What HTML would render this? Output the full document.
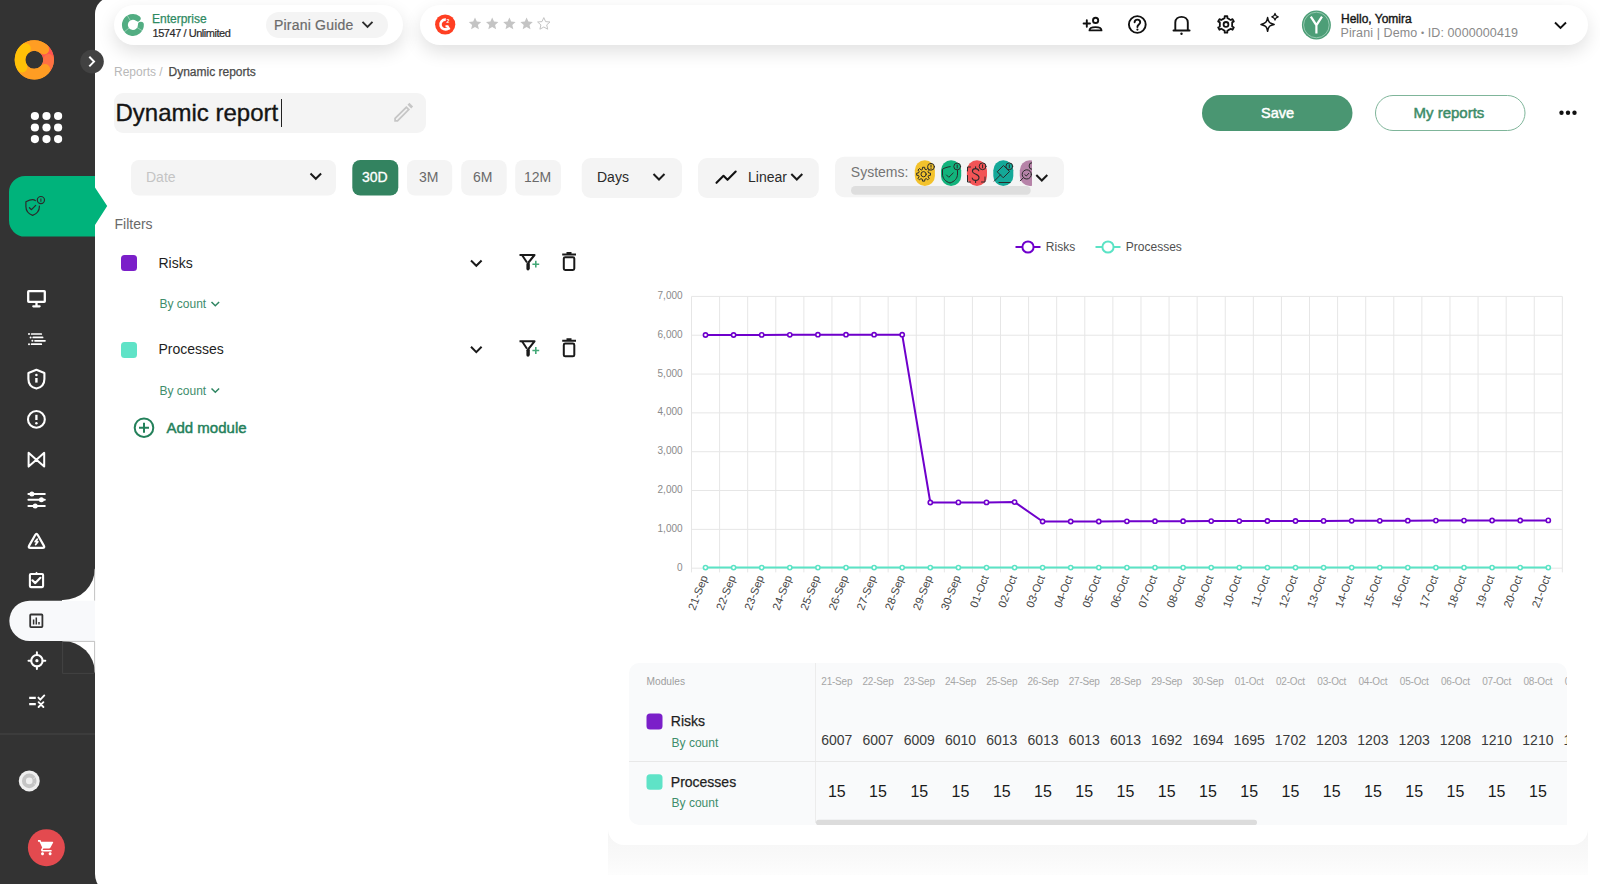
<!DOCTYPE html>
<html><head><meta charset="utf-8">
<style>
*{box-sizing:border-box;margin:0;padding:0}
html,body{width:1600px;height:884px;overflow:hidden}
body{background:#333333;font-family:"Liberation Sans",sans-serif;position:relative;color:#222}
#main{position:absolute;left:95px;top:-3px;width:1505px;height:897px;background:#fff;border-radius:17px 0 0 20px}
.pill{position:absolute;background:#fff;border-radius:20px;box-shadow:0 7px 18px rgba(0,0,0,0.12)}
.t{position:absolute;white-space:nowrap;line-height:1}
.btn{position:absolute;border-radius:8px;background:#f4f4f4}
svg{position:absolute;overflow:visible}
</style></head><body>
<div id="main"></div>
<svg style="left:0;top:0" width="120" height="884" viewBox="0 0 120 884">
  <!-- logo donut -->
  <g fill="none" stroke-width="10.6">
    <circle cx="34.3" cy="59.8" r="14.3" stroke="#ff9d23"/>
    <path d="M43.10,48.53 A14.3,14.3 0 0 1 48.59,59.30" stroke="#ff5252"/>
    <path d="M48.59,59.30 A14.3,14.3 0 0 1 46.16,67.80" stroke="#ff7043" stroke-linecap="round"/>
    <path d="M25.50,48.53 A14.3,14.3 0 0 1 43.87,49.17" stroke="#ff9d23" stroke-linecap="round"/>
    <path d="M44.93,69.37 A14.3,14.3 0 0 1 22.04,67.17" stroke="#ff9d23" stroke-linecap="round"/>
    <path d="M22.04,67.17 A14.3,14.3 0 0 1 25.50,48.53" stroke="#ffc107" stroke-linecap="round"/>
  </g>
  <!-- collapse button -->
  <circle cx="92" cy="61.6" r="11.8" fill="#424242"/>
  <path d="M89.3,56.8 L94,61.6 L89.3,66.4" fill="none" stroke="#fff" stroke-width="2"/>
  <!-- 9 dots -->
  <g fill="#fff">
    <circle cx="34.9" cy="116" r="4.1"/><circle cx="46.5" cy="116" r="4.1"/><circle cx="58.1" cy="116" r="4.1"/>
    <circle cx="34.9" cy="127.5" r="4.1"/><circle cx="46.5" cy="127.5" r="4.1"/><circle cx="58.1" cy="127.5" r="4.1"/>
    <circle cx="34.9" cy="139.1" r="4.1"/><circle cx="46.5" cy="139.1" r="4.1"/><circle cx="58.1" cy="139.1" r="4.1"/>
  </g>
  <!-- green active module item -->
  <path d="M25,176 H95 V187.6 L107.2,206 L95,225 V236.6 H25 A16,16 0 0 1 9,220.6 V192 A16,16 0 0 1 25,176 Z" fill="#00b37b"/>
  <g fill="none" stroke="#2b2b2b" stroke-width="1.2" stroke-linejoin="round" stroke-linecap="round">
    <path d="M35.3,200.5 C33.6,199.1 31,199 25.9,201.8 V206.5 C25.9,210.5 28.5,213.8 32.6,215.4 C36.7,213.8 39.4,210.5 39.4,206.5 V206"/>
    <path d="M29.4,207.7 L31.5,209.7 L35.7,205.4"/>
    <circle cx="40.9" cy="200.1" r="3.6"/>
    <path d="M40.9,198.9 V201.4" stroke-width="1"/>
  </g>
  <!-- menu icons -->
  <g fill="none" stroke="#fff" stroke-width="2.1" stroke-linecap="round" stroke-linejoin="round">
    <!-- monitor -->
    <rect x="28.2" y="291.2" width="16.6" height="10.6" rx="0.6" stroke-width="2.3" stroke-linejoin="miter"/>
    <path d="M36.5,302.5 V305.8 M33.3,306.3 H39.6" stroke-width="2.3"/>
    <!-- list -->
    <path d="M31.6,334 H41.3 M33.2,337.4 H42.6 M35,340.8 H45 M31.6,344.2 H41.3" stroke-width="1.7"/>
    <!-- shield i -->
    <path d="M36.4,369.8 L28.4,373 V379 C28.4,383.8 31.6,387.5 36.4,388.6 C41.2,387.5 44.4,383.8 44.4,379 V373 Z"/>
    <path d="M36.4,378 V382.6" stroke-width="2.4" stroke-linecap="butt"/>
    <!-- exclamation circle -->
    <circle cx="36.4" cy="419.4" r="8.4"/>
    <path d="M36.4,414.8 V420" stroke-width="2.3" stroke-linecap="butt"/>
    <!-- bowtie -->
    <path d="M28.6,452.8 L36.4,459.7 L44.2,452.8 V466.6 L36.4,459.7 L28.6,466.6 Z" stroke-width="2"/>
    <!-- sliders -->
    <path d="M28.4,493.9 H44.8 M28.4,499.8 H44.8 M28.4,506.1 H44.8" stroke-width="2"/>
    <!-- warning -->
    <path d="M37.79,535.06 L43.81,545.64 Q45.10,547.90 42.50,547.90 L30.50,547.90 Q27.90,547.90 29.19,545.64 L35.21,535.06 Q36.50,532.80 37.79,535.06 Z" stroke-width="2.2"/>
    <!-- clipboard -->
    <rect x="29.9" y="574" width="13.2" height="13.1" rx="1" stroke-width="2.1"/>
    <path d="M32.4,580.3 L35.3,583.1 L40.4,577.8" stroke-width="2.2"/>
  </g>
  <g fill="#fff">
    <circle cx="29" cy="334" r="1"/><circle cx="30.6" cy="337.4" r="1"/><circle cx="32.4" cy="340.8" r="1"/><circle cx="29" cy="344.2" r="1"/>
    <circle cx="36.4" cy="375" r="1.3"/>
    <circle cx="36.4" cy="423.2" r="1.25"/>
    <circle cx="31.9" cy="493.9" r="2.5"/><circle cx="41.4" cy="499.8" r="2.5"/><circle cx="35.2" cy="506.1" r="2.5"/>
    <path d="M37.3,539.2 L35.2,541.7 H37.8 L35.7,544.5" fill="none" stroke="#fff" stroke-width="1.8" stroke-linejoin="round" stroke-linecap="round"/>
    <path d="M33.8,574.5 L36.5,571.8 L39.2,574.5 Z"/>
  </g>
  <!-- active reports pill with curves -->
  <rect x="62" y="568" width="33" height="106" fill="#fff"/>
  <path d="M62,567 H95 V568 A32,32 0 0 1 63,600 H62 Z" fill="#333"/>
  <path d="M62,674 H95 V673 A32,32 0 0 0 63,641 H62 Z" fill="#333"/>
  <path d="M29.5,600.7 H95 V641 H29.5 A20.15,20.15 0 0 1 29.5,600.7 Z" fill="#f8f9fb"/>
  <path d="M94.6,569.2 V600.6 M62.2,641.4 H94.6 V672.6" fill="none" stroke="#a8a8a8" stroke-width="0.7"/>
  <path d="M62.6,641.6 V673.4 H94.4" fill="none" stroke="#474747" stroke-width="0.8"/>
  <g fill="none" stroke="#333" stroke-width="1.8">
    <rect x="30.2" y="614.5" width="12.2" height="12.6" rx="0.8"/>
  </g>
  <path d="M33.6,619.5 V624.5 M36.3,617.5 V624.5 M39,622 V624.5" stroke="#333" stroke-width="1.5"/>
  <g fill="none" stroke="#fff" stroke-width="1.8" stroke-linecap="round">
    <!-- crosshair -->
    <circle cx="36.9" cy="660.7" r="5.7" stroke-width="2.1"/>
    <path d="M36.9,652.3 V655 M36.9,666.4 V669.1 M28.5,660.7 H31.2 M42.6,660.7 H45.3" stroke-width="2"/>
    <!-- list check x -->
    <path d="M29.2,697.9 H35.8 M29.2,704.2 H35.8" stroke-width="2.2" stroke-linecap="butt"/>
    <path d="M38.4,697.6 L40.3,699.6 L44.3,695.4 M38.6,702.2 L43.4,707 M43.4,702.2 L38.6,707" stroke-width="1.9"/>
  </g>
  <circle cx="36.9" cy="660.7" r="1.6" fill="#fff"/>
  <!-- divider -->
  <rect x="0" y="733.5" width="95" height="1" fill="#474747"/>
  <!-- gray circle -->
  <circle cx="29.25" cy="780.9" r="10.5" fill="#efefef"/>
  <circle cx="29.25" cy="780.9" r="5.3" fill="none" stroke="#c4c4c4" stroke-width="4"/>
  <path d="M33.5,778.5 L35.5,777.5 M33.8,783.5 L35.8,784.5" stroke="#e8e8e8" stroke-width="0.8"/>
  <!-- cart -->
  <circle cx="46.4" cy="847.7" r="18.5" fill="#e34a4f"/>
  <path transform="translate(37.2,838.6) scale(0.76)" fill="#fff" d="M7 18c-1.1 0-1.99.9-1.99 2S5.9 22 7 22s2-.9 2-2-.9-2-2-2zM1 2v2h2l3.6 7.59-1.35 2.45c-.16.28-.25.61-.25.96 0 1.1.9 2 2 2h12v-2H7.42c-.14 0-.25-.11-.25-.25l.03-.12.9-1.63h7.450c.75 0 1.41-.41 1.75-1.03l3.58-6.49A1.003 1.003 0 0020 4H5.21l-.94-2H1zm16 16c-1.1 0-1.990.9-1.99 2s.89 2 1.99 2 2-.9 2-2-.9-2-2-2z"/>
</svg>
<div class="pill" style="left:114px;top:5px;width:289px;height:40px"></div>
<div class="pill" style="left:420px;top:5px;width:1168px;height:40px"></div>
<svg style="left:0;top:0" width="1600" height="60" viewBox="0 0 1600 60">
  <!-- green C logo -->
  <path d="M140.90,24.62 A8.0,8.0 0 1 1 137.71,18.51" fill="none" stroke="#52ad82" stroke-width="5.9" stroke-linecap="round"/>
  <path d="M130.58,21.04 L126.98,15.04 M129.40,27.73 L123.96,32.14 M136.72,27.28 L142.65,30.99" stroke="#fff" stroke-opacity="0.55" stroke-width="0.7"/>
  <!-- pirani guide pill -->
  <rect x="266" y="12" width="122" height="26" rx="13" fill="#f4f4f4"/>
  <path d="M362.5,21.8 L367.5,26.8 L372.5,21.8" fill="none" stroke="#2b2b2b" stroke-width="1.9"/>
  <!-- G2 -->
  <circle cx="445.2" cy="24.5" r="10.1" fill="#ff3f22"/>
  <path d="M445.8,19.6 A4.9,4.9 0 1 0 448.3,28.4" fill="none" stroke="#fff" stroke-width="2.6"/>
  <path d="M445.5,26.2 L447.6,26.2 L449.6,29.6" fill="none" stroke="#fff" stroke-width="2"/>
  <text x="446.6" y="23.2" font-size="5px" font-weight="bold" fill="#fff" font-family="Liberation Sans">2</text>
  <!-- stars -->
  <g fill="#c4c4c4">
    <path id="star" d="M475,17.6 L476.8,21.6 L481.2,22 L477.9,24.9 L478.9,29.2 L475,27 L471.1,29.2 L472.1,24.9 L468.8,22 L473.2,21.6 Z"/>
    <use href="#star" x="17.2"/><use href="#star" x="34.4"/><use href="#star" x="51.6"/>
  </g>
  <use href="#star" x="68.8" fill="none" stroke="#c4c4c4" stroke-width="1"/>
  <!-- icons -->
  <g fill="none" stroke="#111" stroke-width="1.9" stroke-linecap="round" stroke-linejoin="round">
    <!-- person add -->
    <circle cx="1095.6" cy="20.4" r="2.6"/>
    <path d="M1089.5,30.4 C1089.5,26 1101.5,26 1101.5,30.4 Z"/>
    <path d="M1083.6,23.5 H1090 M1086.8,20.3 V26.7"/>
    <!-- help -->
    <circle cx="1137.3" cy="24.5" r="8.4"/>
    <path d="M1134.6,22.2 C1134.6,18.8 1140.2,18.8 1140.2,22.2 C1140.2,24.4 1137.4,24.6 1137.4,27"/>
    <!-- bell -->
    <path d="M1175.3,30.5 V22.5 C1175.3,15 1187.8,15 1187.8,22.5 V30.5 M1173.5,30.5 H1189.6"/>
    <!-- gear -->
    <path d="M1223.68,18.65 L1224.65,18.04 L1224.69,16.10 L1227.31,16.10 L1227.35,18.04 L1229.82,19.51 L1230.83,20.05 L1232.53,19.11 L1233.84,21.39 L1232.18,22.39 L1232.14,25.26 L1232.18,26.41 L1233.84,27.41 L1232.53,29.69 L1230.83,28.75 L1228.32,30.15 L1227.35,30.76 L1227.31,32.70 L1224.69,32.70 L1224.65,30.76 L1222.18,29.29 L1221.17,28.75 L1219.47,29.69 L1218.16,27.41 L1219.82,26.41 L1219.86,23.54 L1219.82,22.39 L1218.16,21.39 L1219.47,19.11 L1221.17,20.05 Z" stroke-width="1.8"/>
    <circle cx="1226" cy="24.4" r="2.4" stroke-width="1.8"/>
    <!-- sparkle -->
    <path d="M1267.6,17.5 C1268.3,22 1269.5,23.3 1274.2,24.4 C1269.5,25.5 1268.3,26.8 1267.6,31.3 C1266.9,26.8 1265.7,25.5 1261,24.4 C1265.7,23.3 1266.9,22 1267.6,17.5 Z" stroke-width="1.5"/>
    <path d="M1275,13.5 C1275.3,15.6 1275.8,16.1 1278.2,16.8 C1275.8,17.5 1275.3,18 1275,20 C1274.7,18 1274.2,17.5 1271.8,16.8 C1274.2,16.1 1274.7,15.6 1275,13.5 Z" stroke-width="1.3"/>
  </g>
  <circle cx="1181.5" cy="33.8" r="1.2" fill="#111"/>
  <circle cx="1137.4" cy="29.6" r="1.1" fill="#111"/>
  <!-- avatar -->
  <circle cx="1316.4" cy="25" r="14.5" fill="#4d9e77"/>
  <circle cx="1316.4" cy="25" r="12.8" fill="none" stroke="#a8d4bf" stroke-width="0.8"/>
  <path d="M1310.8,16.6 L1316.4,25.2 L1322,16.6 M1316.4,25.2 V33.4" fill="none" stroke="#fff" stroke-width="2.2"/>
  <!-- chevron -->
  <path d="M1555,22.5 L1560.5,28 L1566,22.5" fill="none" stroke="#111" stroke-width="1.9"/>
</svg>
<div class="t" style="left:152px;top:13.2px;font-size:12px;color:#2f8a62;-webkit-text-stroke:0.25px #2f8a62">Enterprise</div>
<div class="t" style="left:152.5px;top:28.2px;font-size:11px;color:#2a2a2a;letter-spacing:-0.45px;-webkit-text-stroke:0.2px #2a2a2a">15747 / Unlimited</div>
<div class="t" style="left:274px;top:17.7px;font-size:14px;color:#6b6b6b;letter-spacing:0.2px;-webkit-text-stroke:0.2px #6b6b6b">Pirani Guide</div>
<div class="t" style="left:1341px;top:12.6px;font-size:12px;color:#161616;-webkit-text-stroke:0.4px #161616">Hello, Yomira</div>
<div class="t" style="left:1340.5px;top:27.3px;font-size:12.5px;color:#8a8a8a;letter-spacing:0.1px">Pirani | Demo <span style="font-size:9px;position:relative;top:-1.5px">•</span> ID: 0000000419</div>
<div class="t" style="left:114px;top:65.9px;font-size:12px;color:#b8b8b8">Reports /</div>
<div class="t" style="left:168.5px;top:65.9px;font-size:12px;color:#4a4a4a;-webkit-text-stroke:0.25px #4a4a4a">Dynamic reports</div>
<div class="abs" style="position:absolute;left:113.75px;top:93px;width:312px;height:40px;background:#f4f4f4;border-radius:9px"></div>
<div class="t" style="left:115.5px;top:100.9px;font-size:24px;color:#151515;-webkit-text-stroke:0.35px #151515">Dynamic report</div>
<div style="position:absolute;left:281px;top:99px;width:1.2px;height:28px;background:#222"></div>
<svg style="left:0;top:0" width="1600" height="220" viewBox="0 0 1600 220">
  <!-- pencil -->
  <g fill="#c6c6c6">
    <path d="M394.2,121.7 V118 L406.3,105.9 L410,109.6 L397.9,121.7 Z M396,119.9 H397.1 L407.5,109.5 L406.4,108.4 L396,118.8 Z" fill-rule="evenodd"/>
    <path d="M407.5,104.7 L409.4,102.8 L413.1,106.5 L411.2,108.4 Z"/>
  </g>
  <!-- date select -->
  <rect x="131" y="160" width="205" height="35.5" rx="8" fill="#f4f4f4"/>
  <path d="M310.5,173.5 L315.8,178.8 L321.1,173.5" fill="none" stroke="#1a1a1a" stroke-width="2"/>
  <!-- period buttons -->
  <rect x="352.3" y="160" width="46" height="35.5" rx="8" fill="#338360"/>
  <rect x="407" y="160" width="45.2" height="35.5" rx="8" fill="#f4f4f4"/>
  <rect x="461.2" y="160" width="45.5" height="35.5" rx="8" fill="#f4f4f4"/>
  <rect x="515.2" y="160" width="45.8" height="35.5" rx="8" fill="#f4f4f4"/>
  <!-- days -->
  <rect x="581.7" y="158" width="100.3" height="40" rx="9" fill="#f4f4f4"/>
  <path d="M653.5,174 L659,179.5 L664.5,174" fill="none" stroke="#1a1a1a" stroke-width="2"/>
  <!-- linear -->
  <rect x="698" y="158" width="120.8" height="40" rx="9" fill="#f4f4f4"/>
  <path d="M716.5,182.8 L723.5,175.8 L727.5,179.8 L735.7,171.6" fill="none" stroke="#111" stroke-width="2.1" stroke-linecap="round" stroke-linejoin="round"/>
  <path d="M791.3,174 L796.8,179.5 L802.3,174" fill="none" stroke="#1a1a1a" stroke-width="2"/>
  <!-- systems -->
  <rect x="835" y="156.7" width="229" height="40.5" rx="9" fill="#f4f4f4"/>
  <rect x="851" y="186" width="179.7" height="8.7" rx="4.3" fill="#dedede"/>
  <rect x="914.8" y="160.2" width="20.1" height="25.8" rx="10" fill="#f3c22c"/>
  <rect x="941" y="160.2" width="20.2" height="25.8" rx="10" fill="#12b37c"/>
  <rect x="966.9" y="160.2" width="20.1" height="25.8" rx="10" fill="#f25456"/>
  <rect x="993.3" y="160.2" width="20" height="25.8" rx="10" fill="#14a898"/>
  <clipPath id="clp"><rect x="1010" y="150" width="22" height="50"/></clipPath>
  <rect x="1019.8" y="160.2" width="20" height="25.8" rx="10" fill="#b683a8" clip-path="url(#clp)"/>
  <g fill="none" stroke="#2a2a2a" stroke-width="1" stroke-linejoin="round" stroke-linecap="round">
    <path d="M922.34,169.15 L922.50,167.29 L924.70,167.29 L924.86,169.15 L926.28,169.74 L927.71,168.54 L929.26,170.09 L928.06,171.52 L928.65,172.94 L930.51,173.10 L930.51,175.30 L928.65,175.46 L928.06,176.88 L929.26,178.31 L927.71,179.86 L926.28,178.66 L924.86,179.25 L924.70,181.11 L922.50,181.11 L922.34,179.25 L920.92,178.66 L919.49,179.86 L917.94,178.31 L919.14,176.88 L918.55,175.46 L916.69,175.30 L916.69,173.10 L918.55,172.94 L919.14,171.52 L917.94,170.09 L919.49,168.54 L920.92,169.74 Z"/>
    <circle cx="923.6" cy="174.2" r="2.6"/>
    <circle cx="931" cy="166.8" r="3.4" fill="#f3c22c"/>
    <path d="M931,165 V167.2 M931,168.6 V168.8"/>
    <path d="M950.2,166.6 C947,167 944.5,168 942.5,169.2 V174 C942.5,178.5 945.5,181.5 950,183 C954.5,181.5 957.5,178.5 957.5,174 V170.5"/>
    <path d="M946.5,175 L948.8,177.3 L953.2,173"/>
    <circle cx="957.2" cy="166.5" r="3.4" fill="#12b37c"/>
    <path d="M957.2,165 V168"/>
    <path d="M978.8,170.8 C978.3,168.8 976.5,168.6 975.6,168.6 C973.5,168.6 972.4,169.8 972.4,171.2 C972.4,174.5 979,173.5 979,177.5 C979,179 977.8,180.4 975.6,180.4 C973.8,180.4 972.5,179.5 972.2,178 M975.6,166.8 V168.6 M975.6,180.4 V182.4" stroke-width="1.1"/>
    <path d="M967.5,175.5 V182 H970.5 M981.5,182 H985 V177 M967.5,171 V167 H970.5"/>
    <circle cx="982.6" cy="166.3" r="3.4" fill="#f25456"/>
    <path d="M982.6,164.8 V167.8"/>
    <path d="M994.2,181.2 L1000.5,174.8 M997.5,171.5 L1003.5,165.5 L1009.5,171.5 L1003.5,177.5 Z M999,182.5 H1010"/>
    <circle cx="1009.3" cy="166.3" r="3.4" fill="#14a898"/>
    <path d="M1009.3,164.8 V167.8"/>
    <circle cx="1026.8" cy="174.4" r="4.6" clip-path="url(#clp)"/>
    <path d="M1023.3,177.8 L1020.3,180.8 M1024.8,174.6 L1026.3,176 L1028.8,173.3" clip-path="url(#clp)"/>
    <circle cx="1032.5" cy="166" r="3.4" fill="#b683a8" clip-path="url(#clp)"/>
  </g>
  <path d="M1036.3,175 L1041.8,180.5 L1047.3,175" fill="none" stroke="#1a1a1a" stroke-width="2"/>
  <!-- save / my reports -->
  <rect x="1202" y="95" width="150.5" height="36" rx="18" fill="#4a9672"/>
  <rect x="1375.5" y="95.5" width="149.5" height="35" rx="17.5" fill="#fff" stroke="#7fb59a" stroke-width="1"/>
  <g fill="#111"><circle cx="1561.5" cy="112.8" r="2.2"/><circle cx="1568" cy="112.8" r="2.2"/><circle cx="1574.5" cy="112.8" r="2.2"/></g>
</svg>
<div class="t" style="left:146px;top:170.1px;font-size:14px;color:#c4c4c4">Date</div>
<div class="t" style="left:362px;top:170.1px;font-size:14px;color:#fff;-webkit-text-stroke:0.3px #fff">30D</div>
<div class="t" style="left:419px;top:170.1px;font-size:14px;color:#6a6a6a">3M</div>
<div class="t" style="left:473px;top:170.1px;font-size:14px;color:#6a6a6a">6M</div>
<div class="t" style="left:524px;top:170.1px;font-size:14px;color:#6a6a6a">12M</div>
<div class="t" style="left:597px;top:170.1px;font-size:14px;color:#2a2a2a">Days</div>
<div class="t" style="left:748px;top:170.1px;font-size:14px;color:#2a2a2a">Linear</div>
<div class="t" style="left:850.8px;top:164.9px;font-size:14px;color:#757575">Systems:</div>
<div class="t" style="left:1261px;top:106.2px;font-size:14.5px;color:#fff;-webkit-text-stroke:0.5px #fff">Save</div>
<div class="t" style="left:1413.5px;top:105.4px;font-size:15px;color:#3d8c68;-webkit-text-stroke:0.5px #3d8c68">My reports</div>
<div class="t" style="left:114.5px;top:217.4px;font-size:14px;color:#6a6a6a">Filters</div>
<div style="position:absolute;left:121px;top:255.4px;width:16px;height:16px;border-radius:3.5px;background:#7b1fc9"></div>
<div class="t" style="left:158.5px;top:255.6px;font-size:14px;color:#1e1e1e">Risks</div>
<div class="t" style="left:159.5px;top:298.3px;font-size:12px;color:#3e8d6b">By count</div>
<div style="position:absolute;left:121.3px;top:342px;width:16px;height:16px;border-radius:3.5px;background:#5fe3c7"></div>
<div class="t" style="left:158.5px;top:341.5px;font-size:14px;color:#1e1e1e">Processes</div>
<div class="t" style="left:159.5px;top:384.7px;font-size:12px;color:#3e8d6b">By count</div>
<div class="t" style="left:166.5px;top:420px;font-size:15px;color:#23805a;-webkit-text-stroke:0.45px #23805a">Add module</div>
<svg style="left:0;top:0" width="600" height="450" viewBox="0 0 600 450">
  <g id="frow" fill="none" stroke="#1a1a1a" stroke-width="2">
    <path d="M471,260.5 L476.3,265.8 L481.6,260.5"/>
    <path d="M519.5,255 H534.5 L528.5,262.5 V269 M528.5,262.5 L534.5,255" stroke-linejoin="round" stroke-width="2.1"/>
    <path d="M522,255 L527,262.5" />
    <path d="M562.2,254.5 H576 M566.5,253 H571.5" stroke-width="2"/>
    <rect x="563.8" y="257.2" width="10.5" height="12.8" rx="1.4"/>
  </g>
  <path d="M528,264 V268.8" stroke="#1a1a1a" stroke-width="3.2" stroke-linecap="round"/>
  <path d="M532.4,264.2 H539.2 M535.8,260.8 V267.6" stroke="#43a877" stroke-width="1.6"/>
  <use href="#frow" y="86.3"/>
  <path d="M528,350.3 V355.1" stroke="#1a1a1a" stroke-width="3.2" stroke-linecap="round"/>
  <path d="M532.4,350.5 H539.2 M535.8,347.1 V353.9" stroke="#43a877" stroke-width="1.6"/>
  <path d="M211.5,302 L215.3,305.8 L219.1,302" fill="none" stroke="#2e8561" stroke-width="1.5"/>
  <path d="M211.5,388.5 L215.3,392.3 L219.1,388.5" fill="none" stroke="#2e8561" stroke-width="1.5"/>
  <circle cx="144" cy="427.7" r="9.3" fill="none" stroke="#23805a" stroke-width="2"/>
  <path d="M139,427.7 H149 M144,422.7 V432.7" stroke="#23805a" stroke-width="2"/>
</svg>
<div style="position:absolute;left:608px;top:830px;width:979.5px;height:44.5px;background:linear-gradient(to bottom,#f5f5f5 0%,#f9f9f9 60%,#fdfdfd 100%)"></div>
<div style="position:absolute;left:608px;top:215px;width:979.5px;height:630px;border-radius:16px;background:#fff"></div>
<svg style="left:0;top:0" width="1600" height="884" viewBox="0 0 1600 884">
<path d="M691.5,568.2 H1562.3 M691.5,529.37 H1562.3 M691.5,490.54 H1562.3 M691.5,451.71 H1562.3 M691.5,412.89 H1562.3 M691.5,374.06 H1562.3 M691.5,335.23 H1562.3 M691.5,296.4 H1562.3 M691.5,296.4 V572.4 M719.59,296.4 V572.4 M747.68,296.4 V572.4 M775.78,296.4 V572.4 M803.87,296.4 V572.4 M831.96,296.4 V572.4 M860.05,296.4 V572.4 M888.14,296.4 V572.4 M916.24,296.4 V572.4 M944.33,296.4 V572.4 M972.42,296.4 V572.4 M1000.51,296.4 V572.4 M1028.6,296.4 V572.4 M1056.7,296.4 V572.4 M1084.79,296.4 V572.4 M1112.88,296.4 V572.4 M1140.97,296.4 V572.4 M1169.06,296.4 V572.4 M1197.15,296.4 V572.4 M1225.25,296.4 V572.4 M1253.34,296.4 V572.4 M1281.43,296.4 V572.4 M1309.52,296.4 V572.4 M1337.61,296.4 V572.4 M1365.71,296.4 V572.4 M1393.8,296.4 V572.4 M1421.89,296.4 V572.4 M1449.98,296.4 V572.4 M1478.07,296.4 V572.4 M1506.17,296.4 V572.4 M1534.26,296.4 V572.4 M1562.35,296.4 V572.4" stroke="#e6e6e6" stroke-width="1" fill="none"/>
<text x="682.6" y="570.7" text-anchor="end" font-size="10px" fill="#8a8a8a" font-family="Liberation Sans">0</text>
<text x="682.6" y="531.9" text-anchor="end" font-size="10px" fill="#8a8a8a" font-family="Liberation Sans">1,000</text>
<text x="682.6" y="493.0" text-anchor="end" font-size="10px" fill="#8a8a8a" font-family="Liberation Sans">2,000</text>
<text x="682.6" y="454.2" text-anchor="end" font-size="10px" fill="#8a8a8a" font-family="Liberation Sans">3,000</text>
<text x="682.6" y="415.4" text-anchor="end" font-size="10px" fill="#8a8a8a" font-family="Liberation Sans">4,000</text>
<text x="682.6" y="376.6" text-anchor="end" font-size="10px" fill="#8a8a8a" font-family="Liberation Sans">5,000</text>
<text x="682.6" y="337.7" text-anchor="end" font-size="10px" fill="#8a8a8a" font-family="Liberation Sans">6,000</text>
<text x="682.6" y="298.9" text-anchor="end" font-size="10px" fill="#8a8a8a" font-family="Liberation Sans">7,000</text>
<text transform="translate(707.9,577.2) rotate(-69)" text-anchor="end" font-size="11.2px" fill="#444" font-family="Liberation Sans">21-Sep</text>
<text transform="translate(736.0,577.2) rotate(-69)" text-anchor="end" font-size="11.2px" fill="#444" font-family="Liberation Sans">22-Sep</text>
<text transform="translate(764.1,577.2) rotate(-69)" text-anchor="end" font-size="11.2px" fill="#444" font-family="Liberation Sans">23-Sep</text>
<text transform="translate(792.2,577.2) rotate(-69)" text-anchor="end" font-size="11.2px" fill="#444" font-family="Liberation Sans">24-Sep</text>
<text transform="translate(820.3,577.2) rotate(-69)" text-anchor="end" font-size="11.2px" fill="#444" font-family="Liberation Sans">25-Sep</text>
<text transform="translate(848.4,577.2) rotate(-69)" text-anchor="end" font-size="11.2px" fill="#444" font-family="Liberation Sans">26-Sep</text>
<text transform="translate(876.5,577.2) rotate(-69)" text-anchor="end" font-size="11.2px" fill="#444" font-family="Liberation Sans">27-Sep</text>
<text transform="translate(904.6,577.2) rotate(-69)" text-anchor="end" font-size="11.2px" fill="#444" font-family="Liberation Sans">28-Sep</text>
<text transform="translate(932.7,577.2) rotate(-69)" text-anchor="end" font-size="11.2px" fill="#444" font-family="Liberation Sans">29-Sep</text>
<text transform="translate(960.8,577.2) rotate(-69)" text-anchor="end" font-size="11.2px" fill="#444" font-family="Liberation Sans">30-Sep</text>
<text transform="translate(988.9,577.2) rotate(-69)" text-anchor="end" font-size="11.2px" fill="#444" font-family="Liberation Sans">01-Oct</text>
<text transform="translate(1017.0,577.2) rotate(-69)" text-anchor="end" font-size="11.2px" fill="#444" font-family="Liberation Sans">02-Oct</text>
<text transform="translate(1045.0,577.2) rotate(-69)" text-anchor="end" font-size="11.2px" fill="#444" font-family="Liberation Sans">03-Oct</text>
<text transform="translate(1073.1,577.2) rotate(-69)" text-anchor="end" font-size="11.2px" fill="#444" font-family="Liberation Sans">04-Oct</text>
<text transform="translate(1101.2,577.2) rotate(-69)" text-anchor="end" font-size="11.2px" fill="#444" font-family="Liberation Sans">05-Oct</text>
<text transform="translate(1129.3,577.2) rotate(-69)" text-anchor="end" font-size="11.2px" fill="#444" font-family="Liberation Sans">06-Oct</text>
<text transform="translate(1157.4,577.2) rotate(-69)" text-anchor="end" font-size="11.2px" fill="#444" font-family="Liberation Sans">07-Oct</text>
<text transform="translate(1185.5,577.2) rotate(-69)" text-anchor="end" font-size="11.2px" fill="#444" font-family="Liberation Sans">08-Oct</text>
<text transform="translate(1213.6,577.2) rotate(-69)" text-anchor="end" font-size="11.2px" fill="#444" font-family="Liberation Sans">09-Oct</text>
<text transform="translate(1241.7,577.2) rotate(-69)" text-anchor="end" font-size="11.2px" fill="#444" font-family="Liberation Sans">10-Oct</text>
<text transform="translate(1269.8,577.2) rotate(-69)" text-anchor="end" font-size="11.2px" fill="#444" font-family="Liberation Sans">11-Oct</text>
<text transform="translate(1297.9,577.2) rotate(-69)" text-anchor="end" font-size="11.2px" fill="#444" font-family="Liberation Sans">12-Oct</text>
<text transform="translate(1326.0,577.2) rotate(-69)" text-anchor="end" font-size="11.2px" fill="#444" font-family="Liberation Sans">13-Oct</text>
<text transform="translate(1354.1,577.2) rotate(-69)" text-anchor="end" font-size="11.2px" fill="#444" font-family="Liberation Sans">14-Oct</text>
<text transform="translate(1382.2,577.2) rotate(-69)" text-anchor="end" font-size="11.2px" fill="#444" font-family="Liberation Sans">15-Oct</text>
<text transform="translate(1410.2,577.2) rotate(-69)" text-anchor="end" font-size="11.2px" fill="#444" font-family="Liberation Sans">16-Oct</text>
<text transform="translate(1438.3,577.2) rotate(-69)" text-anchor="end" font-size="11.2px" fill="#444" font-family="Liberation Sans">17-Oct</text>
<text transform="translate(1466.4,577.2) rotate(-69)" text-anchor="end" font-size="11.2px" fill="#444" font-family="Liberation Sans">18-Oct</text>
<text transform="translate(1494.5,577.2) rotate(-69)" text-anchor="end" font-size="11.2px" fill="#444" font-family="Liberation Sans">19-Oct</text>
<text transform="translate(1522.6,577.2) rotate(-69)" text-anchor="end" font-size="11.2px" fill="#444" font-family="Liberation Sans">20-Oct</text>
<text transform="translate(1550.7,577.2) rotate(-69)" text-anchor="end" font-size="11.2px" fill="#444" font-family="Liberation Sans">21-Oct</text>
<polyline points="705.5,567.6 733.6,567.6 761.7,567.6 789.8,567.6 817.9,567.6 846.0,567.6 874.1,567.6 902.2,567.6 930.3,567.6 958.4,567.6 986.5,567.6 1014.6,567.6 1042.6,567.6 1070.7,567.6 1098.8,567.6 1126.9,567.6 1155.0,567.6 1183.1,567.6 1211.2,567.6 1239.3,567.6 1267.4,567.6 1295.5,567.6 1323.6,567.6 1351.7,567.6 1379.8,567.6 1407.8,567.6 1435.9,567.6 1464.0,567.6 1492.1,567.6 1520.2,567.6 1548.3,567.6" fill="none" stroke="#5be3c5" stroke-width="2" stroke-linejoin="round"/><circle cx="705.5" cy="567.6" r="2.1" fill="#fff" stroke="#5be3c5" stroke-width="1.6"/><circle cx="733.6" cy="567.6" r="2.1" fill="#fff" stroke="#5be3c5" stroke-width="1.6"/><circle cx="761.7" cy="567.6" r="2.1" fill="#fff" stroke="#5be3c5" stroke-width="1.6"/><circle cx="789.8" cy="567.6" r="2.1" fill="#fff" stroke="#5be3c5" stroke-width="1.6"/><circle cx="817.9" cy="567.6" r="2.1" fill="#fff" stroke="#5be3c5" stroke-width="1.6"/><circle cx="846.0" cy="567.6" r="2.1" fill="#fff" stroke="#5be3c5" stroke-width="1.6"/><circle cx="874.1" cy="567.6" r="2.1" fill="#fff" stroke="#5be3c5" stroke-width="1.6"/><circle cx="902.2" cy="567.6" r="2.1" fill="#fff" stroke="#5be3c5" stroke-width="1.6"/><circle cx="930.3" cy="567.6" r="2.1" fill="#fff" stroke="#5be3c5" stroke-width="1.6"/><circle cx="958.4" cy="567.6" r="2.1" fill="#fff" stroke="#5be3c5" stroke-width="1.6"/><circle cx="986.5" cy="567.6" r="2.1" fill="#fff" stroke="#5be3c5" stroke-width="1.6"/><circle cx="1014.6" cy="567.6" r="2.1" fill="#fff" stroke="#5be3c5" stroke-width="1.6"/><circle cx="1042.6" cy="567.6" r="2.1" fill="#fff" stroke="#5be3c5" stroke-width="1.6"/><circle cx="1070.7" cy="567.6" r="2.1" fill="#fff" stroke="#5be3c5" stroke-width="1.6"/><circle cx="1098.8" cy="567.6" r="2.1" fill="#fff" stroke="#5be3c5" stroke-width="1.6"/><circle cx="1126.9" cy="567.6" r="2.1" fill="#fff" stroke="#5be3c5" stroke-width="1.6"/><circle cx="1155.0" cy="567.6" r="2.1" fill="#fff" stroke="#5be3c5" stroke-width="1.6"/><circle cx="1183.1" cy="567.6" r="2.1" fill="#fff" stroke="#5be3c5" stroke-width="1.6"/><circle cx="1211.2" cy="567.6" r="2.1" fill="#fff" stroke="#5be3c5" stroke-width="1.6"/><circle cx="1239.3" cy="567.6" r="2.1" fill="#fff" stroke="#5be3c5" stroke-width="1.6"/><circle cx="1267.4" cy="567.6" r="2.1" fill="#fff" stroke="#5be3c5" stroke-width="1.6"/><circle cx="1295.5" cy="567.6" r="2.1" fill="#fff" stroke="#5be3c5" stroke-width="1.6"/><circle cx="1323.6" cy="567.6" r="2.1" fill="#fff" stroke="#5be3c5" stroke-width="1.6"/><circle cx="1351.7" cy="567.6" r="2.1" fill="#fff" stroke="#5be3c5" stroke-width="1.6"/><circle cx="1379.8" cy="567.6" r="2.1" fill="#fff" stroke="#5be3c5" stroke-width="1.6"/><circle cx="1407.8" cy="567.6" r="2.1" fill="#fff" stroke="#5be3c5" stroke-width="1.6"/><circle cx="1435.9" cy="567.6" r="2.1" fill="#fff" stroke="#5be3c5" stroke-width="1.6"/><circle cx="1464.0" cy="567.6" r="2.1" fill="#fff" stroke="#5be3c5" stroke-width="1.6"/><circle cx="1492.1" cy="567.6" r="2.1" fill="#fff" stroke="#5be3c5" stroke-width="1.6"/><circle cx="1520.2" cy="567.6" r="2.1" fill="#fff" stroke="#5be3c5" stroke-width="1.6"/><circle cx="1548.3" cy="567.6" r="2.1" fill="#fff" stroke="#5be3c5" stroke-width="1.6"/>
<polyline points="705.5,335.0 733.6,335.0 761.7,334.9 789.8,334.8 817.9,334.7 846.0,334.7 874.1,334.7 902.2,334.7 930.3,502.5 958.4,502.4 986.5,502.4 1014.6,502.1 1042.6,521.5 1070.7,521.5 1098.8,521.5 1126.9,521.3 1155.0,521.2 1183.1,521.2 1211.2,521.1 1239.3,521.1 1267.4,521.0 1295.5,521.0 1323.6,520.9 1351.7,520.8 1379.8,520.8 1407.8,520.7 1435.9,520.6 1464.0,520.6 1492.1,520.5 1520.2,520.5 1548.3,520.4" fill="none" stroke="#6f00cc" stroke-width="2" stroke-linejoin="round"/><circle cx="705.5" cy="335.0" r="2.1" fill="#fff" stroke="#6f00cc" stroke-width="1.6"/><circle cx="733.6" cy="335.0" r="2.1" fill="#fff" stroke="#6f00cc" stroke-width="1.6"/><circle cx="761.7" cy="334.9" r="2.1" fill="#fff" stroke="#6f00cc" stroke-width="1.6"/><circle cx="789.8" cy="334.8" r="2.1" fill="#fff" stroke="#6f00cc" stroke-width="1.6"/><circle cx="817.9" cy="334.7" r="2.1" fill="#fff" stroke="#6f00cc" stroke-width="1.6"/><circle cx="846.0" cy="334.7" r="2.1" fill="#fff" stroke="#6f00cc" stroke-width="1.6"/><circle cx="874.1" cy="334.7" r="2.1" fill="#fff" stroke="#6f00cc" stroke-width="1.6"/><circle cx="902.2" cy="334.7" r="2.1" fill="#fff" stroke="#6f00cc" stroke-width="1.6"/><circle cx="930.3" cy="502.5" r="2.1" fill="#fff" stroke="#6f00cc" stroke-width="1.6"/><circle cx="958.4" cy="502.4" r="2.1" fill="#fff" stroke="#6f00cc" stroke-width="1.6"/><circle cx="986.5" cy="502.4" r="2.1" fill="#fff" stroke="#6f00cc" stroke-width="1.6"/><circle cx="1014.6" cy="502.1" r="2.1" fill="#fff" stroke="#6f00cc" stroke-width="1.6"/><circle cx="1042.6" cy="521.5" r="2.1" fill="#fff" stroke="#6f00cc" stroke-width="1.6"/><circle cx="1070.7" cy="521.5" r="2.1" fill="#fff" stroke="#6f00cc" stroke-width="1.6"/><circle cx="1098.8" cy="521.5" r="2.1" fill="#fff" stroke="#6f00cc" stroke-width="1.6"/><circle cx="1126.9" cy="521.3" r="2.1" fill="#fff" stroke="#6f00cc" stroke-width="1.6"/><circle cx="1155.0" cy="521.2" r="2.1" fill="#fff" stroke="#6f00cc" stroke-width="1.6"/><circle cx="1183.1" cy="521.2" r="2.1" fill="#fff" stroke="#6f00cc" stroke-width="1.6"/><circle cx="1211.2" cy="521.1" r="2.1" fill="#fff" stroke="#6f00cc" stroke-width="1.6"/><circle cx="1239.3" cy="521.1" r="2.1" fill="#fff" stroke="#6f00cc" stroke-width="1.6"/><circle cx="1267.4" cy="521.0" r="2.1" fill="#fff" stroke="#6f00cc" stroke-width="1.6"/><circle cx="1295.5" cy="521.0" r="2.1" fill="#fff" stroke="#6f00cc" stroke-width="1.6"/><circle cx="1323.6" cy="520.9" r="2.1" fill="#fff" stroke="#6f00cc" stroke-width="1.6"/><circle cx="1351.7" cy="520.8" r="2.1" fill="#fff" stroke="#6f00cc" stroke-width="1.6"/><circle cx="1379.8" cy="520.8" r="2.1" fill="#fff" stroke="#6f00cc" stroke-width="1.6"/><circle cx="1407.8" cy="520.7" r="2.1" fill="#fff" stroke="#6f00cc" stroke-width="1.6"/><circle cx="1435.9" cy="520.6" r="2.1" fill="#fff" stroke="#6f00cc" stroke-width="1.6"/><circle cx="1464.0" cy="520.6" r="2.1" fill="#fff" stroke="#6f00cc" stroke-width="1.6"/><circle cx="1492.1" cy="520.5" r="2.1" fill="#fff" stroke="#6f00cc" stroke-width="1.6"/><circle cx="1520.2" cy="520.5" r="2.1" fill="#fff" stroke="#6f00cc" stroke-width="1.6"/><circle cx="1548.3" cy="520.4" r="2.1" fill="#fff" stroke="#6f00cc" stroke-width="1.6"/>
<path d="M1015.5,247 H1040.5" stroke="#6f00cc" stroke-width="2"/><circle cx="1028" cy="247" r="5.6" fill="#fff" stroke="#6f00cc" stroke-width="2"/>
<text x="1045.8" y="251.2" font-size="12px" fill="#505050" font-family="Liberation Sans">Risks</text>
<path d="M1095.5,247 H1120.5" stroke="#5be3c5" stroke-width="2"/><circle cx="1108" cy="247" r="5.6" fill="#fff" stroke="#5be3c5" stroke-width="2"/>
<text x="1125.8" y="251.2" font-size="12px" fill="#505050" font-family="Liberation Sans">Processes</text>
</svg>
<div style="position:absolute;left:629px;top:663px;width:938px;height:162px;border-radius:10px 10px 0 10px;background:#f9fafb;overflow:hidden">
<svg style="left:-629px;top:-663px" width="1600" height="884" viewBox="0 0 1600 884">
<rect x="815" y="663" width="1" height="160" fill="#ececec"/>
<rect x="629" y="761" width="938" height="1" fill="#e8e8e8"/>
<rect x="816" y="819.7" width="441" height="5.3" rx="2.6" fill="#dcdcdc"/>
<text x="646.5" y="684.5" font-size="10.2px" fill="#9e9e9e" font-family="Liberation Sans">Modules</text>
<rect x="646.5" y="713.5" width="16" height="16" rx="3.5" fill="#7b1fc9"/>
<text x="670.8" y="726.3" font-size="14px" fill="#1e1e1e" stroke="#1e1e1e" stroke-width="0.25" font-family="Liberation Sans">Risks</text>
<text x="671.6" y="746.6" font-size="12px" fill="#3e8d6b" font-family="Liberation Sans">By count</text>
<rect x="646.5" y="774.3" width="16" height="15.5" rx="3.5" fill="#5fe3c7"/>
<text x="670.8" y="787.4" font-size="14px" fill="#1e1e1e" stroke="#1e1e1e" stroke-width="0.25" font-family="Liberation Sans">Processes</text>
<text x="671.6" y="806.7" font-size="12px" fill="#3e8d6b" font-family="Liberation Sans">By count</text>
<text x="836.8" y="684.5" text-anchor="middle" font-size="10px" letter-spacing="-0.2" fill="#a6a6a6" font-family="Liberation Sans">21-Sep</text>
<text x="836.8" y="744.6" text-anchor="middle" font-size="14px" fill="#3a3a3a" font-family="Liberation Sans">6007</text>
<text x="836.8" y="796.5" text-anchor="middle" font-size="16px" fill="#1a1a1a" font-family="Liberation Sans">15</text>
<text x="878.0" y="684.5" text-anchor="middle" font-size="10px" letter-spacing="-0.2" fill="#a6a6a6" font-family="Liberation Sans">22-Sep</text>
<text x="878.0" y="744.6" text-anchor="middle" font-size="14px" fill="#3a3a3a" font-family="Liberation Sans">6007</text>
<text x="878.0" y="796.5" text-anchor="middle" font-size="16px" fill="#1a1a1a" font-family="Liberation Sans">15</text>
<text x="919.3" y="684.5" text-anchor="middle" font-size="10px" letter-spacing="-0.2" fill="#a6a6a6" font-family="Liberation Sans">23-Sep</text>
<text x="919.3" y="744.6" text-anchor="middle" font-size="14px" fill="#3a3a3a" font-family="Liberation Sans">6009</text>
<text x="919.3" y="796.5" text-anchor="middle" font-size="16px" fill="#1a1a1a" font-family="Liberation Sans">15</text>
<text x="960.5" y="684.5" text-anchor="middle" font-size="10px" letter-spacing="-0.2" fill="#a6a6a6" font-family="Liberation Sans">24-Sep</text>
<text x="960.5" y="744.6" text-anchor="middle" font-size="14px" fill="#3a3a3a" font-family="Liberation Sans">6010</text>
<text x="960.5" y="796.5" text-anchor="middle" font-size="16px" fill="#1a1a1a" font-family="Liberation Sans">15</text>
<text x="1001.8" y="684.5" text-anchor="middle" font-size="10px" letter-spacing="-0.2" fill="#a6a6a6" font-family="Liberation Sans">25-Sep</text>
<text x="1001.8" y="744.6" text-anchor="middle" font-size="14px" fill="#3a3a3a" font-family="Liberation Sans">6013</text>
<text x="1001.8" y="796.5" text-anchor="middle" font-size="16px" fill="#1a1a1a" font-family="Liberation Sans">15</text>
<text x="1043.0" y="684.5" text-anchor="middle" font-size="10px" letter-spacing="-0.2" fill="#a6a6a6" font-family="Liberation Sans">26-Sep</text>
<text x="1043.0" y="744.6" text-anchor="middle" font-size="14px" fill="#3a3a3a" font-family="Liberation Sans">6013</text>
<text x="1043.0" y="796.5" text-anchor="middle" font-size="16px" fill="#1a1a1a" font-family="Liberation Sans">15</text>
<text x="1084.2" y="684.5" text-anchor="middle" font-size="10px" letter-spacing="-0.2" fill="#a6a6a6" font-family="Liberation Sans">27-Sep</text>
<text x="1084.2" y="744.6" text-anchor="middle" font-size="14px" fill="#3a3a3a" font-family="Liberation Sans">6013</text>
<text x="1084.2" y="796.5" text-anchor="middle" font-size="16px" fill="#1a1a1a" font-family="Liberation Sans">15</text>
<text x="1125.5" y="684.5" text-anchor="middle" font-size="10px" letter-spacing="-0.2" fill="#a6a6a6" font-family="Liberation Sans">28-Sep</text>
<text x="1125.5" y="744.6" text-anchor="middle" font-size="14px" fill="#3a3a3a" font-family="Liberation Sans">6013</text>
<text x="1125.5" y="796.5" text-anchor="middle" font-size="16px" fill="#1a1a1a" font-family="Liberation Sans">15</text>
<text x="1166.7" y="684.5" text-anchor="middle" font-size="10px" letter-spacing="-0.2" fill="#a6a6a6" font-family="Liberation Sans">29-Sep</text>
<text x="1166.7" y="744.6" text-anchor="middle" font-size="14px" fill="#3a3a3a" font-family="Liberation Sans">1692</text>
<text x="1166.7" y="796.5" text-anchor="middle" font-size="16px" fill="#1a1a1a" font-family="Liberation Sans">15</text>
<text x="1208.0" y="684.5" text-anchor="middle" font-size="10px" letter-spacing="-0.2" fill="#a6a6a6" font-family="Liberation Sans">30-Sep</text>
<text x="1208.0" y="744.6" text-anchor="middle" font-size="14px" fill="#3a3a3a" font-family="Liberation Sans">1694</text>
<text x="1208.0" y="796.5" text-anchor="middle" font-size="16px" fill="#1a1a1a" font-family="Liberation Sans">15</text>
<text x="1249.2" y="684.5" text-anchor="middle" font-size="10px" letter-spacing="-0.2" fill="#a6a6a6" font-family="Liberation Sans">01-Oct</text>
<text x="1249.2" y="744.6" text-anchor="middle" font-size="14px" fill="#3a3a3a" font-family="Liberation Sans">1695</text>
<text x="1249.2" y="796.5" text-anchor="middle" font-size="16px" fill="#1a1a1a" font-family="Liberation Sans">15</text>
<text x="1290.4" y="684.5" text-anchor="middle" font-size="10px" letter-spacing="-0.2" fill="#a6a6a6" font-family="Liberation Sans">02-Oct</text>
<text x="1290.4" y="744.6" text-anchor="middle" font-size="14px" fill="#3a3a3a" font-family="Liberation Sans">1702</text>
<text x="1290.4" y="796.5" text-anchor="middle" font-size="16px" fill="#1a1a1a" font-family="Liberation Sans">15</text>
<text x="1331.7" y="684.5" text-anchor="middle" font-size="10px" letter-spacing="-0.2" fill="#a6a6a6" font-family="Liberation Sans">03-Oct</text>
<text x="1331.7" y="744.6" text-anchor="middle" font-size="14px" fill="#3a3a3a" font-family="Liberation Sans">1203</text>
<text x="1331.7" y="796.5" text-anchor="middle" font-size="16px" fill="#1a1a1a" font-family="Liberation Sans">15</text>
<text x="1372.9" y="684.5" text-anchor="middle" font-size="10px" letter-spacing="-0.2" fill="#a6a6a6" font-family="Liberation Sans">04-Oct</text>
<text x="1372.9" y="744.6" text-anchor="middle" font-size="14px" fill="#3a3a3a" font-family="Liberation Sans">1203</text>
<text x="1372.9" y="796.5" text-anchor="middle" font-size="16px" fill="#1a1a1a" font-family="Liberation Sans">15</text>
<text x="1414.2" y="684.5" text-anchor="middle" font-size="10px" letter-spacing="-0.2" fill="#a6a6a6" font-family="Liberation Sans">05-Oct</text>
<text x="1414.2" y="744.6" text-anchor="middle" font-size="14px" fill="#3a3a3a" font-family="Liberation Sans">1203</text>
<text x="1414.2" y="796.5" text-anchor="middle" font-size="16px" fill="#1a1a1a" font-family="Liberation Sans">15</text>
<text x="1455.4" y="684.5" text-anchor="middle" font-size="10px" letter-spacing="-0.2" fill="#a6a6a6" font-family="Liberation Sans">06-Oct</text>
<text x="1455.4" y="744.6" text-anchor="middle" font-size="14px" fill="#3a3a3a" font-family="Liberation Sans">1208</text>
<text x="1455.4" y="796.5" text-anchor="middle" font-size="16px" fill="#1a1a1a" font-family="Liberation Sans">15</text>
<text x="1496.6" y="684.5" text-anchor="middle" font-size="10px" letter-spacing="-0.2" fill="#a6a6a6" font-family="Liberation Sans">07-Oct</text>
<text x="1496.6" y="744.6" text-anchor="middle" font-size="14px" fill="#3a3a3a" font-family="Liberation Sans">1210</text>
<text x="1496.6" y="796.5" text-anchor="middle" font-size="16px" fill="#1a1a1a" font-family="Liberation Sans">15</text>
<text x="1537.9" y="684.5" text-anchor="middle" font-size="10px" letter-spacing="-0.2" fill="#a6a6a6" font-family="Liberation Sans">08-Oct</text>
<text x="1537.9" y="744.6" text-anchor="middle" font-size="14px" fill="#3a3a3a" font-family="Liberation Sans">1210</text>
<text x="1537.9" y="796.5" text-anchor="middle" font-size="16px" fill="#1a1a1a" font-family="Liberation Sans">15</text>
<text x="1579.1" y="684.5" text-anchor="middle" font-size="10px" letter-spacing="-0.2" fill="#a6a6a6" font-family="Liberation Sans">09-Oct</text>
<text x="1579.1" y="744.6" text-anchor="middle" font-size="14px" fill="#3a3a3a" font-family="Liberation Sans">1212</text>
<text x="1579.1" y="796.5" text-anchor="middle" font-size="16px" fill="#1a1a1a" font-family="Liberation Sans">15</text>
</svg></div>
</body></html>
